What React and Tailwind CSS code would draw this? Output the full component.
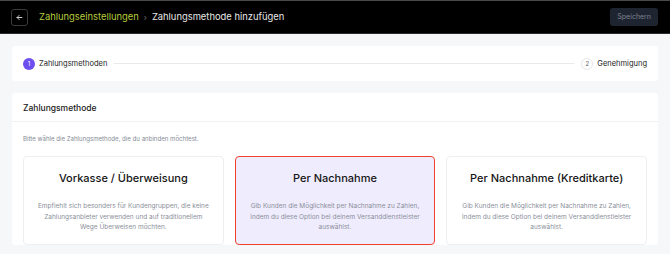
import React from "react";

const cards = [
  {
    title: "Vorkasse / Überweisung",
    desc: "Empfiehlt sich besonders für Kundengruppen, die keine Zahlungsanbieter verwenden und auf traditionellem Wege Überweisen möchten.",
    active: false,
  },
  {
    title: "Per Nachnahme",
    desc: "Gib Kunden die Möglichkeit per Nachnahme zu Zahlen, indem du diese Option bei deinem Versanddienstleister auswählst.",
    active: true,
  },
  {
    title: "Per Nachnahme (Kreditkarte)",
    desc: "Gib Kunden die Möglichkeit per Nachnahme zu Zahlen, indem du diese Option bei deinem Versanddienstleister auswählst.",
    active: false,
  },
];

export default function App() {
  return (
    <div className="w-[670px] h-[254px] overflow-hidden bg-[#f6f7f9] font-['Inter',sans-serif]">
      <header className="h-[34px] bg-black border-t border-[#4a4a4a] border-b border-b-[#2a2a2a] flex items-center pl-[11px] pr-[12px]">
        <button className="w-[17px] h-[17px] rounded-[3px] border border-[#3a3a3a] flex items-center justify-center text-[#d0d0d0]">
          <svg width="7" height="7" viewBox="0 0 10 10" fill="none" stroke="currentColor" strokeWidth="1.4" strokeLinecap="round" strokeLinejoin="round">
            <path d="M8.5 5H1.5M4.5 2L1.5 5L4.5 8" />
          </svg>
        </button>
        <div className="flex items-center ml-[11px] text-[9.4px]">
          <span className="text-[#b8cc3c]">Zahlungseinstellungen</span>
          <span className="text-[#777] ml-[5px] mr-[5px] text-[8px]">›</span>
          <span className="text-[#e8e8e8]">Zahlungsmethode hinzufügen</span>
        </div>
        <button className="ml-auto h-[18px] px-[7px] rounded-[3px] bg-[#1f2530] text-[#7c8290] text-[7px]">Speichern</button>
      </header>

      <div className="px-[12px] pt-[12px]">
        <div className="h-[35px] bg-white rounded-[3px] flex items-center px-[11px]">
          <div className="w-[12px] h-[12px] rounded-full bg-[#6d4ff0] text-white text-[6px] flex items-center justify-center">1</div>
          <span className="ml-[4px] text-[7.5px] text-[#222]">Zahlungsmethoden</span>
          <div className="flex-1 h-px bg-[#e8e9ec] mx-[7px]"></div>
          <div className="w-[12px] h-[12px] rounded-full border border-[#e5e6ea] text-[#666] text-[6px] flex items-center justify-center">2</div>
          <span className="ml-[4px] text-[7.5px] text-[#222]">Genehmigung</span>
        </div>

        <div className="mt-[12px] bg-white rounded-[3px]">
          <div className="h-[29px] flex items-center px-[11px] border-b border-[#f0f1f3]">
            <span className="text-[8.5px] font-medium text-[#1a1a1a] translate-y-[1px]">Zahlungsmethode</span>
          </div>
          <div className="px-[11px] pt-[12px]">
            <p className="text-[6.1px] leading-[9px] text-[#858b97]">Bitte wähle die Zahlungsmethode, die du anbinden möchtest.</p>
            <div className="grid grid-cols-3 gap-[11px] mt-[13px]">
              {cards.map((c) => (
                <div
                  key={c.title}
                  className={
                    c.active
                      ? "h-[89px] rounded-[4px] border border-[#f0402e] bg-[#efecfd] flex flex-col items-center px-[12px] pt-[14px]"
                      : "h-[89px] rounded-[4px] border border-[#eeeff2] bg-white flex flex-col items-center px-[12px] pt-[14px]"
                  }
                >
                  <div className="text-[11px] leading-[14px] font-medium text-[#151515]">{c.title}</div>
                  <p className="mt-[16px] text-[6.5px] leading-[10.5px] text-[#8a8f9a] text-center">{c.desc}</p>
                </div>
              ))}
            </div>
          </div>
        </div>
      </div>
    </div>
  );
}
